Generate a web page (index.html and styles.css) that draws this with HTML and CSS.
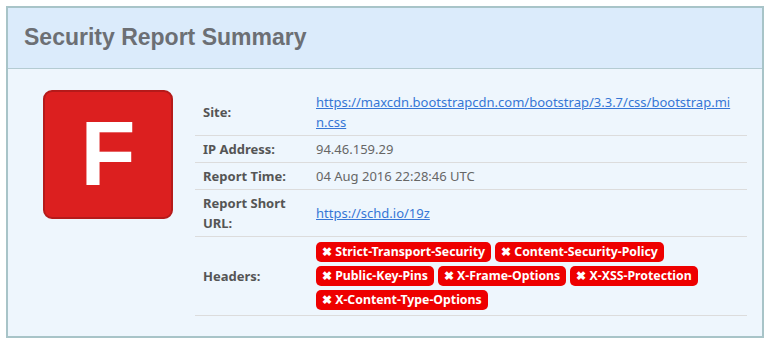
FILE: index.html
```html
<!DOCTYPE html>
<html lang="en">
<head>
    <meta charset="UTF-8">
    <title>Security Report Summary</title>
    <link rel="stylesheet" href="styles.css">
</head>
<body>
<div class="panel">
    <div class="panel-head">
        <h3 class="panel-title">Security Report Summary</h3>
    </div>
    <div class="panel-body">
        <div class="grade">F</div>
        <table class="report">
            <tr>
                <th>Site:</th>
                <td class="wrap"><a href="#">https://maxcdn.bootstrapcdn.com/bootstrap/3.3.7/css/bootstrap.min.css</a></td>
            </tr>
            <tr>
                <th>IP Address:</th>
                <td>94.46.159.29</td>
            </tr>
            <tr>
                <th>Report Time:</th>
                <td>04 Aug 2016 22:28:46 UTC</td>
            </tr>
            <tr>
                <th>Report Short URL:</th>
                <td><a href="#">https://schd.io/19z</a></td>
            </tr>
            <tr>
                <th>Headers:</th>
                <td class="headers">
                    <div class="badges">
                        <span class="bad">&#10006; Strict-Transport-Security</span>
                        <span class="bad">&#10006; Content-Security-Policy</span>
                        <span class="bad">&#10006; Public-Key-Pins</span>
                        <span class="bad">&#10006; X-Frame-Options</span>
                        <span class="bad">&#10006; X-XSS-Protection</span>
                        <span class="bad">&#10006; X-Content-Type-Options</span>
                    </div>
                </td>
            </tr>
        </table>
    </div>
</div>
</body>
</html>
```

FILE: styles.css
```css
body{
    margin: 0;
    padding: 6px 5px 6px 6px;
    background: #fff;
    font-family: "Noto Sans", "Open Sans", sans-serif;
}
.panel{
    border: 2px solid #a8c4c8;
    background-color: #eef6fd;
}
.panel-head{
    background-color: #dbebfb;
    border-bottom: 1px solid #b4cbd2;
    padding: 16px 16px 17px;
}
.panel-title{
    margin: 0;
    font: 700 23px/27px "Liberation Sans", Arial, sans-serif;
    color: #6c6f74;
}
.panel-body{
    display: flex;
    align-items: flex-start;
    padding: 20px 15px 20px 35px;
}
.grade{
    width: 126px;
    height: 125px;
    flex: none;
    margin-top: 1px;
    background-color: #dc1f1f;
    border: 2px solid #b51a1a;
    border-radius: 9px;
    color: #fff;
    text-align: center;
    font: 700 90px/125px "Liberation Sans", Arial, sans-serif;
}
.report{
    margin-left: 22px;
    flex: 1;
    border-collapse: collapse;
    font-size: 13px;
    line-height: 20px;
}
.report th,
.report td{
    padding: 3px 8px;
    border-bottom: 1px solid #dcdcdc;
    vertical-align: middle;
}
.report th{
    width: 97px;
    text-align: left;
    color: #555;
    font-weight: 700;
}
.report td{
    color: #666;
}
.report a{
    color: #3676d6;
}
.wrap{
    word-break: break-all;
}
.report .headers{
    padding-top: 5px;
    padding-bottom: 5px;
}
.badges{
    display: flex;
    flex-wrap: wrap;
    gap: 4px;
}
.bad{
    display: inline-block;
    height: 20px;
    line-height: 20px;
    padding: 0 6px;
    background-color: #ee0000;
    color: #fff;
    border-radius: 5px;
    font-size: 12.3px;
    font-weight: 700;
    white-space: nowrap;
}
```
